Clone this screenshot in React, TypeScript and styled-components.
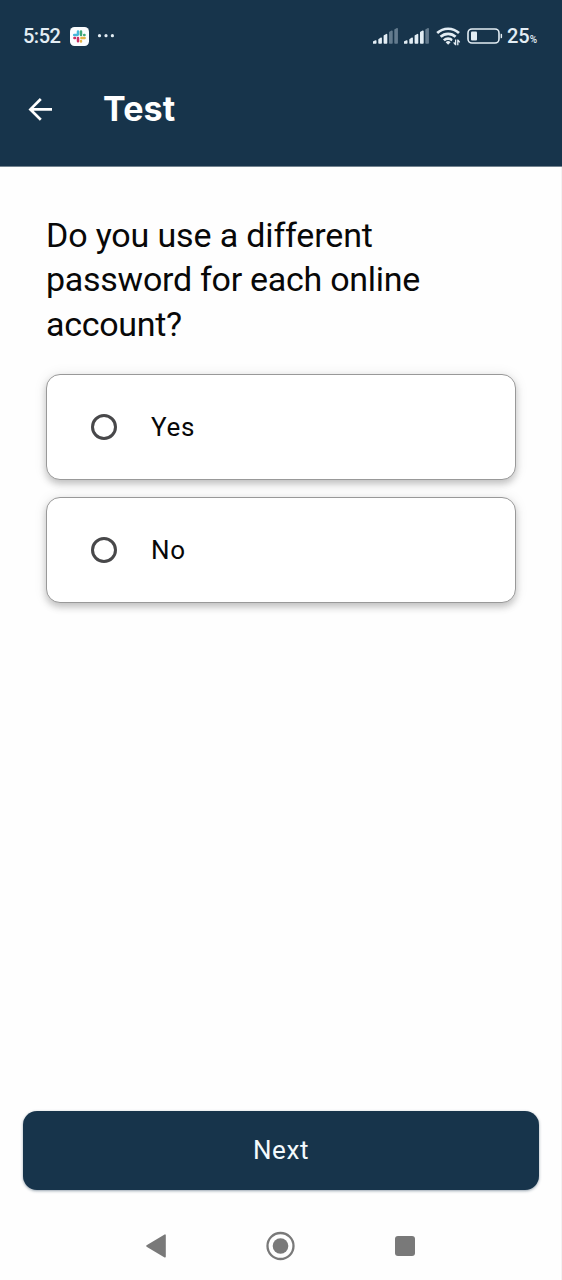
import React from 'react';
import styled, { createGlobalStyle } from 'styled-components';

const NAVY = '#17344b';

const GlobalStyle = createGlobalStyle`
  * { box-sizing: border-box; }
  body { margin: 0; background: #fefefe; }
`;

const Screen = styled.div`
  width: 562px;
  height: 1280px;
  display: flex;
  flex-direction: column;
  background: #fefefe;
  border-right: 1px solid #f3f3f3;
  font-family: Roboto, 'Liberation Sans', sans-serif;
  color: #080808;
`;

const Header = styled.header`
  height: 167px;
  margin-right: -1px;
  flex: none;
  background: ${NAVY};
  border-bottom: 1px solid #73838f;
  color: #fff;
`;

const StatusBar = styled.div`
  height: 72px;
  padding: 0 25px 0 23px;
  display: flex;
  align-items: center;
  justify-content: space-between;
  color: #e3edf4;
`;

const StatusGroup = styled.div`
  display: flex;
  align-items: center;
  svg { display: block; flex: none; }
`;

const Clock = styled.span`
  font-size: 20px;
  line-height: 24px;
  width: 47px;
  letter-spacing: -0.5px;
  font-weight: 500;
`;

const Percent = styled.span`
  display: flex;
  align-items: baseline;
  font-size: 20px;
  line-height: 24px;
  font-weight: 500;
  margin-left: 4px;
  small { font-size: 10px; line-height: 12px; }
`;

const TitleBar = styled.div`
  height: 74px;
  display: flex;
  align-items: center;
  padding-left: 28px;
`;

const BackButton = styled.button`
  width: 75px;
  padding: 0;
  border: 0;
  background: none;
  color: inherit;
  display: flex;
`;

const Title = styled.h1`
  margin: 0;
  font: 700 34px/44px Inter, sans-serif;
  letter-spacing: 0.1px;
`;

const Content = styled.main`
  flex: 1;
  padding: 46px 45px 0 46px;
`;

const Question = styled.h2`
  margin: 0 0 28px;
  font-weight: 400;
  font-size: 34px;
  line-height: 44.33px;
`;

const Line = styled.span<{ $spacing: number }>`
  display: block;
  white-space: nowrap;
  letter-spacing: ${(p) => p.$spacing}px;
`;

const Options = styled.div`
  display: flex;
  flex-direction: column;
  gap: 17px;
`;

const Option = styled.label`
  height: 106px;
  display: flex;
  align-items: center;
  padding-left: 44px;
  background: #fff;
  border: 1.5px solid #999;
  border-radius: 14px;
  box-shadow: 0 4px 7px rgba(0, 0, 0, 0.2), 0 1px 14px rgba(0, 0, 0, 0.09);
`;

const Radio = styled.span`
  width: 26px;
  height: 26px;
  border: 3px solid #48484a;
  border-radius: 50%;
`;

const OptionText = styled.span`
  margin: 1px 0 0 34px;
  font-size: 26px;
  line-height: 32px;
  letter-spacing: 0.7px;
`;

const NextButton = styled.button`
  flex: none;
  height: 79px;
  margin: 0 22px 0 23px;
  padding: 0 0 2px;
  border: 0;
  border-radius: 14px;
  background: ${NAVY};
  color: #f4fafd;
  font: 400 26px/32px Roboto, sans-serif;
  letter-spacing: 0.6px;
  box-shadow: 0 1px 3px rgba(23, 52, 75, 0.45);
`;

const NavBar = styled.nav`
  height: 90px;
  flex: none;
  display: flex;
  align-items: center;
  justify-content: space-between;
  padding: 21px 146px 0 145px;
`;

const SlackBadge = () => (
  <svg width="19" height="19" viewBox="0 0 19 19">
    <rect width="19" height="19" rx="4.5" fill="#fbfdff" />
    <g strokeWidth="2.5" strokeLinecap="round" fill="none">
      <path d="M8 4.6v3M4.2 8H7" stroke="#45b7d9" />
      <path d="M11 4.6v3.3M14.2 8h.3" stroke="#3fa779" />
      <path d="M11.4 11h3.2M11 14v.4" stroke="#e4b448" />
      <path d="M8 11v3.3M4.4 11h.6" stroke="#ca2f64" />
    </g>
  </svg>
);

const DotsSvg = styled.svg`
  margin-left: 8px;
`;

const Dots = () => (
  <DotsSvg width="18" height="4" viewBox="0 0 18 4">
    <g fill="#e3edf4">
      <circle cx="2.5" cy="1.7" r="1.6" />
      <circle cx="9" cy="1.7" r="1.6" />
      <circle cx="15.4" cy="1.7" r="1.6" />
    </g>
  </DotsSvg>
);

const BARS = [
  'M.6 14 2.8 12.9V15H.6z',
  'M6 11.5 8.2 10.2V15H6z',
  'M11.3 7.9l2.3-1.3V15h-2.3z',
  'M16.7 4.4l2.3-1.2V15h-2.3z',
  'M22 1.8 24.2.7V15H22z',
];

const SignalSvg = styled.svg`
  margin-right: 6px;
`;

const Signal = ({ level }: { level: number }) => (
  <SignalSvg width="25.5" height="16" viewBox="0 0 25.5 16">
    {BARS.map((d, i) => {
      const color = i < level ? '#e3edf4' : '#647b8e';
      return <path key={d} d={d} fill={color} stroke={color} strokeWidth="1.4" strokeLinejoin="round" />;
    })}
  </SignalSvg>
);

const Wifi = () => (
  <svg width="26" height="20" viewBox="0 0 26 20">
    <g fill="none" stroke="#e3edf4" strokeWidth="2.7">
      <path d="M1.2 7.1a15.8 15.8 0 0 1 21.8 0" />
      <path d="M4.6 10.8a10.9 10.9 0 0 1 15 0" />
      <path d="M7.9 14.4a6 6 0 0 1 8.4 0" />
    </g>
    <path d="M9.6 16.3a3.6 3.6 0 0 1 5 0l-2.5 2.5z" fill="#e3edf4" />
    <path d="M16.5 13h8.5V20h-8.5z" fill={NAVY} />
    <path d="M19.6 13.6v5.6M19.6 18.9l-1.9-2.5M21.8 19.2v-5.6M21.8 13.9l1.9 2.5" fill="none" stroke="#e3edf4" strokeWidth="1.3" />
  </svg>
);

const BatterySvg = styled.svg`
  margin-left: 5px;
`;

const Battery = () => (
  <BatterySvg width="36" height="16" viewBox="0 0 36 16">
    <rect x="1" y="1" width="31" height="14" rx="4" fill="none" stroke="#e3edf4" strokeWidth="1.6" />
    <rect x="4" y="3.6" width="6" height="8.8" rx="1" fill="#e3edf4" />
    <path d="M33.6 5.7h.5a1 1 0 0 1 1 1v2.6a1 1 0 0 1-1 1h-.5z" fill="#e3edf4" />
  </BatterySvg>
);

const BackArrow = () => (
  <svg width="25" height="24" viewBox="0 0 25 24" fill="none" stroke="#fff" strokeWidth="2.7">
    <path d="M24 12.4H3M12.8 2 2.4 12.4l10.4 10.4" />
  </svg>
);

export default function App() {
  return (
    <>
      <GlobalStyle />
      <Screen>
        <Header>
          <StatusBar>
            <StatusGroup>
              <Clock>5:52</Clock>
              <SlackBadge />
              <Dots />
            </StatusGroup>
            <StatusGroup>
              <Signal level={3} />
              <Signal level={4} />
              <Wifi />
              <Battery />
              <Percent>25<small>%</small></Percent>
            </StatusGroup>
          </StatusBar>
          <TitleBar>
            <BackButton aria-label="Back"><BackArrow /></BackButton>
            <Title>Test</Title>
          </TitleBar>
        </Header>
        <Content>
          <Question>
            <Line $spacing={-0.15}>Do you use a different</Line>
            <Line $spacing={-0.27}>password for each online</Line>
            <Line $spacing={-0.3}>account?</Line>
          </Question>
          <Options>
            <Option><Radio /><OptionText>Yes</OptionText></Option>
            <Option><Radio /><OptionText>No</OptionText></Option>
          </Options>
        </Content>
        <NextButton>Next</NextButton>
        <NavBar>
          <svg width="21" height="26" viewBox="0 0 21 26">
            <path d="M2 13 20 2.2v21.6z" fill="#797979" stroke="#797979" strokeWidth="1.6" strokeLinejoin="round" />
          </svg>
          <svg width="30" height="30" viewBox="0 0 30 30">
            <circle cx="14.5" cy="15" r="13" fill="none" stroke="#797979" strokeWidth="2.3" />
            <circle cx="14.5" cy="15" r="7.8" fill="#797979" />
          </svg>
          <svg width="20" height="20" viewBox="0 0 20 20">
            <rect width="20" height="20" rx="3" fill="#797979" />
          </svg>
        </NavBar>
      </Screen>
    </>
  );
}
